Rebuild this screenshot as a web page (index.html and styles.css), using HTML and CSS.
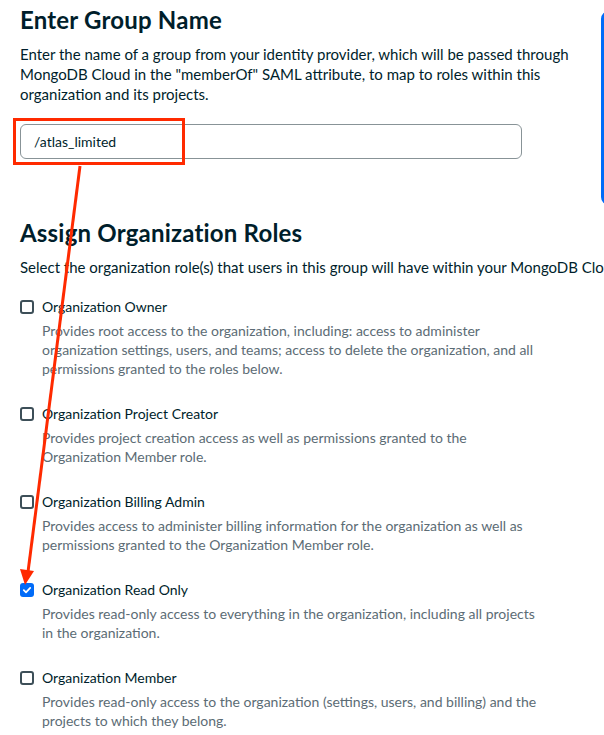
FILE: index.html
```html
<!DOCTYPE html>
<html lang="en">
<head>
<meta charset="utf-8">
<title>Group mapping</title>
<link rel="stylesheet" href="styles.css">
</head>
<body>
<div class="page">
  <main class="main">
    <h1 class="title">Enter Group Name</h1>
    <p class="intro">Enter the name of a group from your identity provider, which will be passed through<br>MongoDB Cloud in the "memberOf" SAML attribute, to map to roles within this<br>organization and its projects.</p>
    <div class="field"><span class="field-value">/atlas_limited</span></div>

    <h2 class="title title-roles">Assign Organization Roles</h2>
    <p class="select-text">Select the organization role(s) that users in this group will have within your MongoDB Cloud organization.</p>

    <ul class="roles">
      <li class="role">
        <div class="role-head"><span class="box"></span><span class="role-name">Organization Owner</span></div>
        <p class="role-desc">Provides root access to the organization, including: access to administer<br>organization settings, users, and teams; access to delete the organization, and all<br>permissions granted to the roles below.</p>
      </li>
      <li class="role">
        <div class="role-head"><span class="box"></span><span class="role-name">Organization Project Creator</span></div>
        <p class="role-desc">Provides project creation access as well as permissions granted to the<br>Organization Member role.</p>
      </li>
      <li class="role">
        <div class="role-head"><span class="box"></span><span class="role-name">Organization Billing Admin</span></div>
        <p class="role-desc">Provides access to administer billing information for the organization as well as<br>permissions granted to the Organization Member role.</p>
      </li>
      <li class="role">
        <div class="role-head"><span class="box box-checked"><svg viewBox="0 0 14 14" width="14" height="14"><path d="M3.8 7.2 L6 9.3 L10.2 4.9" fill="none" stroke="#fff" stroke-width="1.8" stroke-linecap="round" stroke-linejoin="round"/></svg></span><span class="role-name">Organization Read Only</span></div>
        <p class="role-desc">Provides read-only access to everything in the organization, including all projects<br>in the organization.</p>
      </li>
      <li class="role">
        <div class="role-head"><span class="box"></span><span class="role-name">Organization Member</span></div>
        <p class="role-desc">Provides read-only access to the organization (settings, users, and billing) and the<br>projects to which they belong.</p>
      </li>
    </ul>
  </main>
  <aside class="side-panel"></aside>
</div>
<svg class="annotation" width="604" height="735" viewBox="0 0 604 735">
  <rect x="14.5" y="119.5" width="169" height="44" fill="none" stroke="#ff2a00" stroke-width="3"/>
  <line x1="80" y1="166" x2="28" y2="572" stroke="#ff2a00" stroke-width="3"/>
  <polygon points="20,569 34,571 25,585" fill="#ff2a00"/>
</svg>
</body>
</html>
```

FILE: styles.css
```css
html, body {
  margin: 0;
  padding: 0;
  background: #ffffff;
  overflow: hidden;
}

body {
  position: relative;
  width: 604px;
  height: 735px;
  font-family: Lato, "Noto Sans", "DejaVu Sans", sans-serif;
  color: #001e2b;
}

.page {
  display: flex;
  align-items: flex-start;
  gap: 21px;
}

.main {
  flex: none;
  width: 580px;
  box-sizing: border-box;
  padding: 6px 0 0 20px;
}

.title {
  margin: 0;
  font-size: 24px;
  line-height: 28px;
  font-weight: 700;
  color: #001e2b;
  letter-spacing: 0.2px;
}

.intro {
  margin: 10px 0 0;
  font-size: 15px;
  line-height: 20px;
  color: #001e2b;
}

.field {
  margin-top: 20px;
  width: 502px;
  height: 35px;
  box-sizing: border-box;
  border: 1px solid #889397;
  border-radius: 6px;
  display: flex;
  align-items: center;
  padding-left: 13px;
  font-size: 14px;
}

.title-roles {
  margin-top: 60px;
}

.select-text {
  margin: 10px 0 0;
  font-size: 15px;
  line-height: 20px;
  white-space: nowrap;
  color: #001e2b;
}

.roles {
  list-style: none;
  margin: 20px 0 0;
  padding: 0;
  display: flex;
  flex-direction: column;
  gap: 26px;
}

.role-head {
  display: flex;
  align-items: center;
  gap: 8px;
  height: 20px;
}

.box {
  flex: none;
  width: 14px;
  height: 14px;
  box-sizing: border-box;
  border: 2px solid #3d4f58;
  border-radius: 3px;
}

.box-checked {
  border: none;
  background: #016bf8;
  display: flex;
}

.role-name {
  font-size: 14px;
  line-height: 20px;
  color: #001e2b;
}

.role-desc {
  margin: 4px 0 0 22px;
  font-size: 14px;
  line-height: 19px;
  color: #5c6c75;
}

.side-panel {
  flex: none;
  width: 300px;
  height: 194px;
  margin-top: 11px;
  box-sizing: border-box;
  border: 3px solid #016bf8;
  border-radius: 8px;
}

.annotation {
  position: absolute;
  left: 0;
  top: 0;
  pointer-events: none;
}
```
